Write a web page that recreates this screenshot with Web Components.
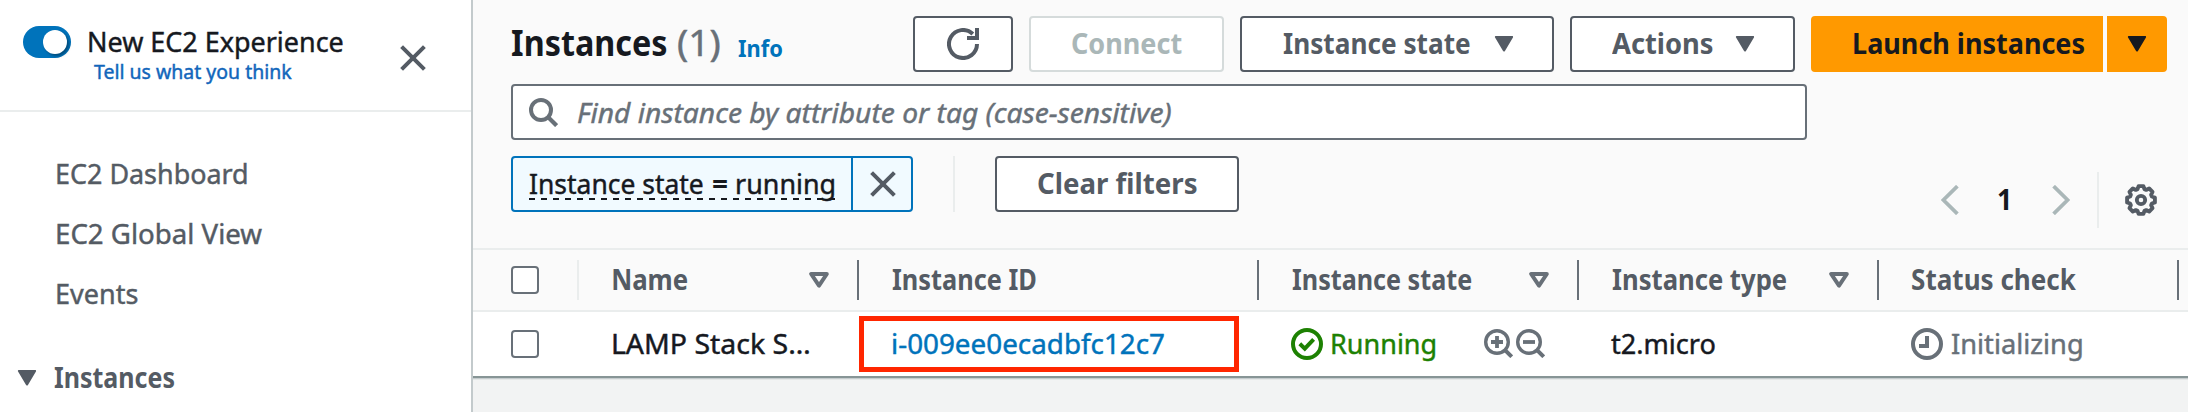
<!DOCTYPE html>
<html lang="en">
<head>
<meta charset="utf-8">
<title>Instances | EC2</title>
<style>
body{margin:0;width:2188px;height:412px;overflow:hidden;background:#f2f3f3;font-family:"Noto Sans","Open Sans",sans-serif;font-size:28px;color:#16191f}
</style>
</head>
<body>
<ec2-console></ec2-console>
<script>
const define = (name, html, Base = HTMLElement) => {
  const tpl = document.createElement('template');
  tpl.innerHTML = html;
  customElements.define(name, class extends Base {
    constructor() {
      super();
      this.attachShadow({mode: 'open'}).append(tpl.content.cloneNode(true));
    }
  });
};

/* Text whose drawn width is fixed by its "w" attribute (condensed or widened as needed). */
const pen = document.createElement('canvas').getContext('2d');
customElements.define('fit-text', class extends HTMLElement {
  constructor() {
    super();
    this.attachShadow({mode: 'open'}).innerHTML = `<style>
      :host{display:block;flex:none;line-height:32px;height:32px;white-space:nowrap}
      span{display:inline-block;transform-origin:0 0;white-space:pre}
    </style><span><slot></slot></span>`;
  }
  connectedCallback() {
    const w = +this.getAttribute('w');
    const cs = getComputedStyle(this);
    pen.font = `${cs.fontStyle} ${cs.fontWeight} ${cs.fontSize} ${cs.fontFamily}`;
    const m = pen.measureText(this.textContent.trim());
    const s = w / (m.actualBoundingBoxRight + m.actualBoundingBoxLeft);
    this.style.width = w + 'px';
    const span = this.shadowRoot.querySelector('span');
    span.style.transform = `translateX(${m.actualBoundingBoxLeft * s}px) scaleX(${s})`;
    if (+cs.fontWeight < 600) span.style.webkitTextStroke = '.45px';
  }
});

const ICONS = {
  close: [26, 26, '<path d="M1.6 1.6l22.8 22.8M24.4 1.6L1.6 24.4" fill="none" stroke="currentColor" stroke-width="4"/>'],
  down: [20, 16, '<path d="M2 1h16l-8 13.4z" fill="currentColor" stroke="currentColor" stroke-width="2.2" stroke-linejoin="round"/>'],
  sort: [20, 16, '<path d="M2.2 2h15.6L10 13.6z" fill="none" stroke="currentColor" stroke-width="4" stroke-linejoin="round"/>'],
  refresh: [32, 32, '<path d="M30 16a14 14 0 1 1-4.2-10" fill="none" stroke="currentColor" stroke-width="4"/><path d="M30 0v10H20" fill="none" stroke="currentColor" stroke-width="4"/>'],
  search: [29, 29, '<circle cx="12" cy="12" r="10" fill="none" stroke="currentColor" stroke-width="4"/><path d="M18.7 18.7l8.9 8.9" stroke="currentColor" stroke-width="4.2"/>'],
  zoomin: [29, 29, '<circle cx="13" cy="13" r="11.3" fill="none" stroke="currentColor" stroke-width="3.4"/><path d="M20.8 20.8l6.9 6.9" stroke="currentColor" stroke-width="4"/><path d="M13 7v12M7 13h12" stroke="currentColor" stroke-width="3.8"/>'],
  zoomout: [29, 29, '<circle cx="13" cy="13" r="11.3" fill="none" stroke="currentColor" stroke-width="3.4"/><path d="M20.8 20.8l6.9 6.9" stroke="currentColor" stroke-width="4"/><path d="M7 13h12" stroke="currentColor" stroke-width="3.8"/>'],
  ok: [32, 32, '<circle cx="16" cy="16" r="14" fill="none" stroke="currentColor" stroke-width="4"/><path d="M8.8 15.8l5 4.8 8.8-9.2" fill="none" stroke="currentColor" stroke-width="4"/>'],
  clock: [32, 32, '<circle cx="16" cy="16" r="14" fill="none" stroke="currentColor" stroke-width="4"/><path d="M16 8v10H8" fill="none" stroke="currentColor" stroke-width="4"/>'],
  prev: [18, 30, '<path d="M16.4 1.2L2.4 15l14 13.8" fill="none" stroke="currentColor" stroke-width="3.8"/>'],
  next: [18, 30, '<path d="M1.6 1.2l14 13.8-14 13.8" fill="none" stroke="currentColor" stroke-width="3.8"/>'],
  gear: [32, 32, (() => {
    let d = '';
    const n = 8, step = Math.PI * 2 / n;
    const p = (r, a) => `${(16 + r * Math.sin(a)).toFixed(2)} ${(16 - r * Math.cos(a)).toFixed(2)}`;
    for (let i = 0; i < n; i++) {
      const a = i * step;
      d += (i ? 'L' : 'M') + p(14.1, a - .17) + 'L' + p(14.1, a + .17) + 'L' + p(11.4, a + .31) + 'L' + p(11.4, a + step - .31);
    }
    return `<path d="${d}z" fill="none" stroke="currentColor" stroke-width="3.9" stroke-linejoin="round"/><circle cx="16" cy="16" r="4.2" fill="none" stroke="currentColor" stroke-width="3.8"/>`;
  })()]
};
customElements.define('ui-icon', class extends HTMLElement {
  constructor() {
    super();
    this.attachShadow({mode: 'open'});
  }
  connectedCallback() {
    const [w, h, body] = ICONS[this.getAttribute('name')];
    this.shadowRoot.innerHTML = `<style>:host{display:block;flex:none;width:${w}px;height:${h}px}svg{display:block}</style>
      <svg width="${w}" height="${h}" viewBox="0 0 ${w} ${h}">${body}</svg>`;
  }
});

define('ui-toggle', `<style>
  :host{display:flex;box-sizing:border-box;width:48px;height:32px;border-radius:16px;background:#0073bb;padding:4px 4px 4px 20px}
  i{width:24px;height:24px;border-radius:50%;background:#fff;box-shadow:2px 2px 3px rgba(0,0,0,.35)}
</style><i></i>`);

define('ui-checkbox', `<style>
  :host{display:block;box-sizing:border-box;width:28px;height:28px;border:2px solid #687078;border-radius:4px;background:#fff}
</style>`);

define('ui-button', `<style>
  :host{display:flex;flex:none;box-sizing:border-box;height:56px;border:2px solid #545b64;border-radius:4px;background:#fff;color:#545b64;font-weight:700;padding:9px 0 0 41px}
  :host([disabled]){border-color:#d5dbdb;color:#aab7b8}
  :host([primary]){border-color:#f90;background:#f90;color:#16191f}
  ::slotted(ui-icon[name=down]){margin-top:9px}
</style><slot></slot>`);

define('ui-token', `<style>
  :host{display:flex;box-sizing:border-box;width:402px;height:56px;border:2px solid #0073bb;border-radius:4px;background:#f1faff}
  .label{width:338px;box-sizing:border-box;padding:9px 0 0 16px}
  .words{display:flex;width:306px;height:33px;padding-left:1px;box-sizing:border-box;
    background:repeating-linear-gradient(90deg,#16191f 0 6px,transparent 6px 12px) 0 100%/100% 2px no-repeat}
  .x{flex:1;border-left:2px solid #0073bb;color:#545b64;padding:13px 0 0 17px}
  b{display:block;margin:0 10px}
</style>
<div class="label"><div class="words"><fit-text w="173">Instance state</fit-text><b><fit-text w="14">=</fit-text></b><fit-text w="97">running</fit-text></div></div>
<div class="x"><ui-icon name="close"></ui-icon></div>`);

define('ec2-sidebar', `<style>
  :host{display:block;box-sizing:border-box;width:473px;height:412px;background:#fff;border-right:2px solid #c3cacc;color:#545b64}
  header{display:flex;height:110px;border-bottom:2px solid #eaeded}
  ui-toggle{margin:26px 0 0 23px}
  .t{margin:25px 0 0 18px;width:311px;color:#16191f}
  .t .a{font-size:20px;color:#16b;margin:-1px 0 0 5px}
  ui-icon[name=close]{margin-top:45px}
  nav{padding:45px 0 0 57px}
  nav fit-text{margin-bottom:28px}
  .g{display:flex;font-weight:700;padding-top:24px;margin-left:-40px}
  .g ui-icon{margin:9px 17px 0 0}
</style>
<header><ui-toggle></ui-toggle><div class="t"><fit-text w="254">New EC2 Experience</fit-text><fit-text class="a" w="198">Tell us what you think</fit-text></div><ui-icon name="close"></ui-icon></header>
<nav><fit-text w="189.5">EC2 Dashboard</fit-text><fit-text w="205">EC2 Global View</fit-text><fit-text w="81">Events</fit-text>
<div class="g"><ui-icon name="down"></ui-icon><fit-text w="120">Instances</fit-text></div></nav>`);

define('ec2-toolbar', `<style>
  :host{display:block;box-sizing:border-box;height:248px;padding:16px 21px 0 38px;background:#fafafa}
  .row{display:flex}
  h1{display:flex;margin:0;width:402px;box-sizing:border-box;padding:11px 0 0 1px;font-size:36px;flex:none}
  h1 .n{font-weight:400;color:#687078;margin-left:11px}
  h1 .i{font-size:24px;color:#0073bb;margin:5px 0 0 18px}
  .btns{display:flex;gap:16px}
  .refresh{padding:10px 0 0 32px;width:100px}
  .split{display:flex;gap:4px}
  .split>:first-child{border-radius:4px 0 0 4px}
  .split>:last-child{border-radius:0 4px 4px 0}
  .search{display:flex;box-sizing:border-box;width:1296px;height:56px;margin-top:12px;border:2px solid #687078;border-radius:4px;background:#fff;color:#687078;font-style:italic;padding:10px 0 0 16px}
  .search ui-icon{margin:2px 20px 0 0}
  .filters{margin-top:16px}
  hr{border:0;margin:0;width:2px;height:56px;background:#eaeded}
  .pager{display:flex;margin:16px 10px 0 auto;font-weight:700}
  .pager ui-icon{color:#aab7b8;margin-top:13px}
  .pager ui-icon[name=gear]{color:#545b64;margin-top:12px}
</style>
<div class="row">
  <h1><fit-text w="154.5">Instances</fit-text><fit-text class="n" w="42">(1)</fit-text><fit-text class="i" w="44">Info</fit-text></h1>
  <div class="btns">
    <ui-button class="refresh"><ui-icon name="refresh"></ui-icon></ui-button>
    <ui-button disabled style="width:195px"><fit-text w="110">Connect</fit-text></ui-button>
    <ui-button style="width:314px"><fit-text w="187">Instance state</fit-text><ui-icon name="down" style="margin-left:24px"></ui-icon></ui-button>
    <ui-button style="width:225px;padding-left:40px"><fit-text w="100.5">Actions</fit-text><ui-icon name="down" style="margin-left:22px"></ui-icon></ui-button>
    <div class="split">
      <ui-button primary style="width:292px"><fit-text w="230">Launch instances</fit-text></ui-button>
      <ui-button primary style="width:60px;padding-left:18px"><ui-icon name="down"></ui-icon></ui-button>
    </div>
  </div>
</div>
<div class="search"><ui-icon name="search"></ui-icon><fit-text w="592.5">Find instance by attribute or tag (case-sensitive)</fit-text></div>
<div class="row filters">
  <ui-token></ui-token>
  <hr style="margin:0 40px">
  <ui-button style="width:244px"><fit-text w="158.5">Clear filters</fit-text></ui-button>
  <div class="pager">
    <ui-icon name="prev"></ui-icon>
    <fit-text w="10.5" style="margin:11px 44px 0 39px">1</fit-text>
    <ui-icon name="next"></ui-icon>
    <hr style="margin:0 26px 0 27px">
    <ui-icon name="gear"></ui-icon>
  </div>
</div>`);

define('ec2-table', `<style>
  :host{display:block}
  .r{display:grid;grid-template-columns:106px 280px 400px 320px 300px 300px 9px;box-sizing:border-box}
  .head{height:64px;background:#fafafa;border:solid #eaeded;border-width:2px 0;font-weight:700;color:#545b64}
  .body{height:64px;background:#fff}
  .c{display:flex;min-width:0;padding:13px 0 0 33px}
  .head .c{margin:10px 0 0;padding-top:3px;height:40px;box-sizing:border-box;border-right:2px solid #687078}
  .head .c:first-child{border-color:#eaeded;padding:6px 0 0 38px}
  .head .c:last-child{border:0}
  .head ui-icon{margin:9px 28px 0 auto;color:#687078}
  .body .c{padding-top:15px}
  .body .c:first-child{padding:18px 0 0 38px}
  .link{color:#0073bb}
  .mark{position:absolute;left:386px;top:68px;width:370px;height:46px;border:5px solid #ff2600}
  .wrap{position:relative}
  .end{height:4px;background:linear-gradient(#879596 0 2px,#c5ccce 2px 3px,#e4e7e7 3px)}
</style>
<div class="wrap">
<div class="r head">
  <div class="c"><ui-checkbox></ui-checkbox></div>
  <div class="c" style="padding-left:34px"><fit-text w="74.5">Name</fit-text><ui-icon name="sort"></ui-icon></div>
  <div class="c"><fit-text w="143.5">Instance ID</fit-text></div>
  <div class="c"><fit-text w="179.5">Instance state</fit-text><ui-icon name="sort"></ui-icon></div>
  <div class="c"><fit-text w="174.5">Instance type</fit-text><ui-icon name="sort"></ui-icon></div>
  <div class="c"><fit-text w="164.5">Status check</fit-text></div>
  <div class="c"></div>
</div>
<div class="r body">
  <div class="c"><ui-checkbox></ui-checkbox></div>
  <div class="c" style="padding-left:34px"><fit-text w="196.5">LAMP Stack S…</fit-text></div>
  <div class="c link" style="padding-left:34px"><fit-text w="271">i-009ee0ecadbfc12c7</fit-text></div>
  <div class="c" style="padding-left:32px;color:#1d8102"><ui-icon name="ok" style="margin:1px 9px 0 0"></ui-icon><fit-text w="103">Running</fit-text>
    <ui-icon name="zoomin" style="margin:2px 3px 0 49px;color:#687078"></ui-icon><ui-icon name="zoomout" style="margin-top:2px;color:#687078"></ui-icon></div>
  <div class="c" style="padding-left:32px"><fit-text w="104">t2.micro</fit-text></div>
  <div class="c" style="padding-left:32px;color:#687078"><ui-icon name="clock" style="margin:1px 9px 0 0"></ui-icon><fit-text w="129.5">Initializing</fit-text></div>
  <div class="c"></div>
</div>
<div class="end"></div>
<div class="mark"></div>
</div>`);

define('ec2-console', `<style>
  :host{display:grid;grid-template-columns:473px 1715px;height:412px}
  main{background:#f2f3f3}
</style><ec2-sidebar></ec2-sidebar><main><ec2-toolbar></ec2-toolbar><ec2-table></ec2-table></main>`);
</script>
</body>
</html>
